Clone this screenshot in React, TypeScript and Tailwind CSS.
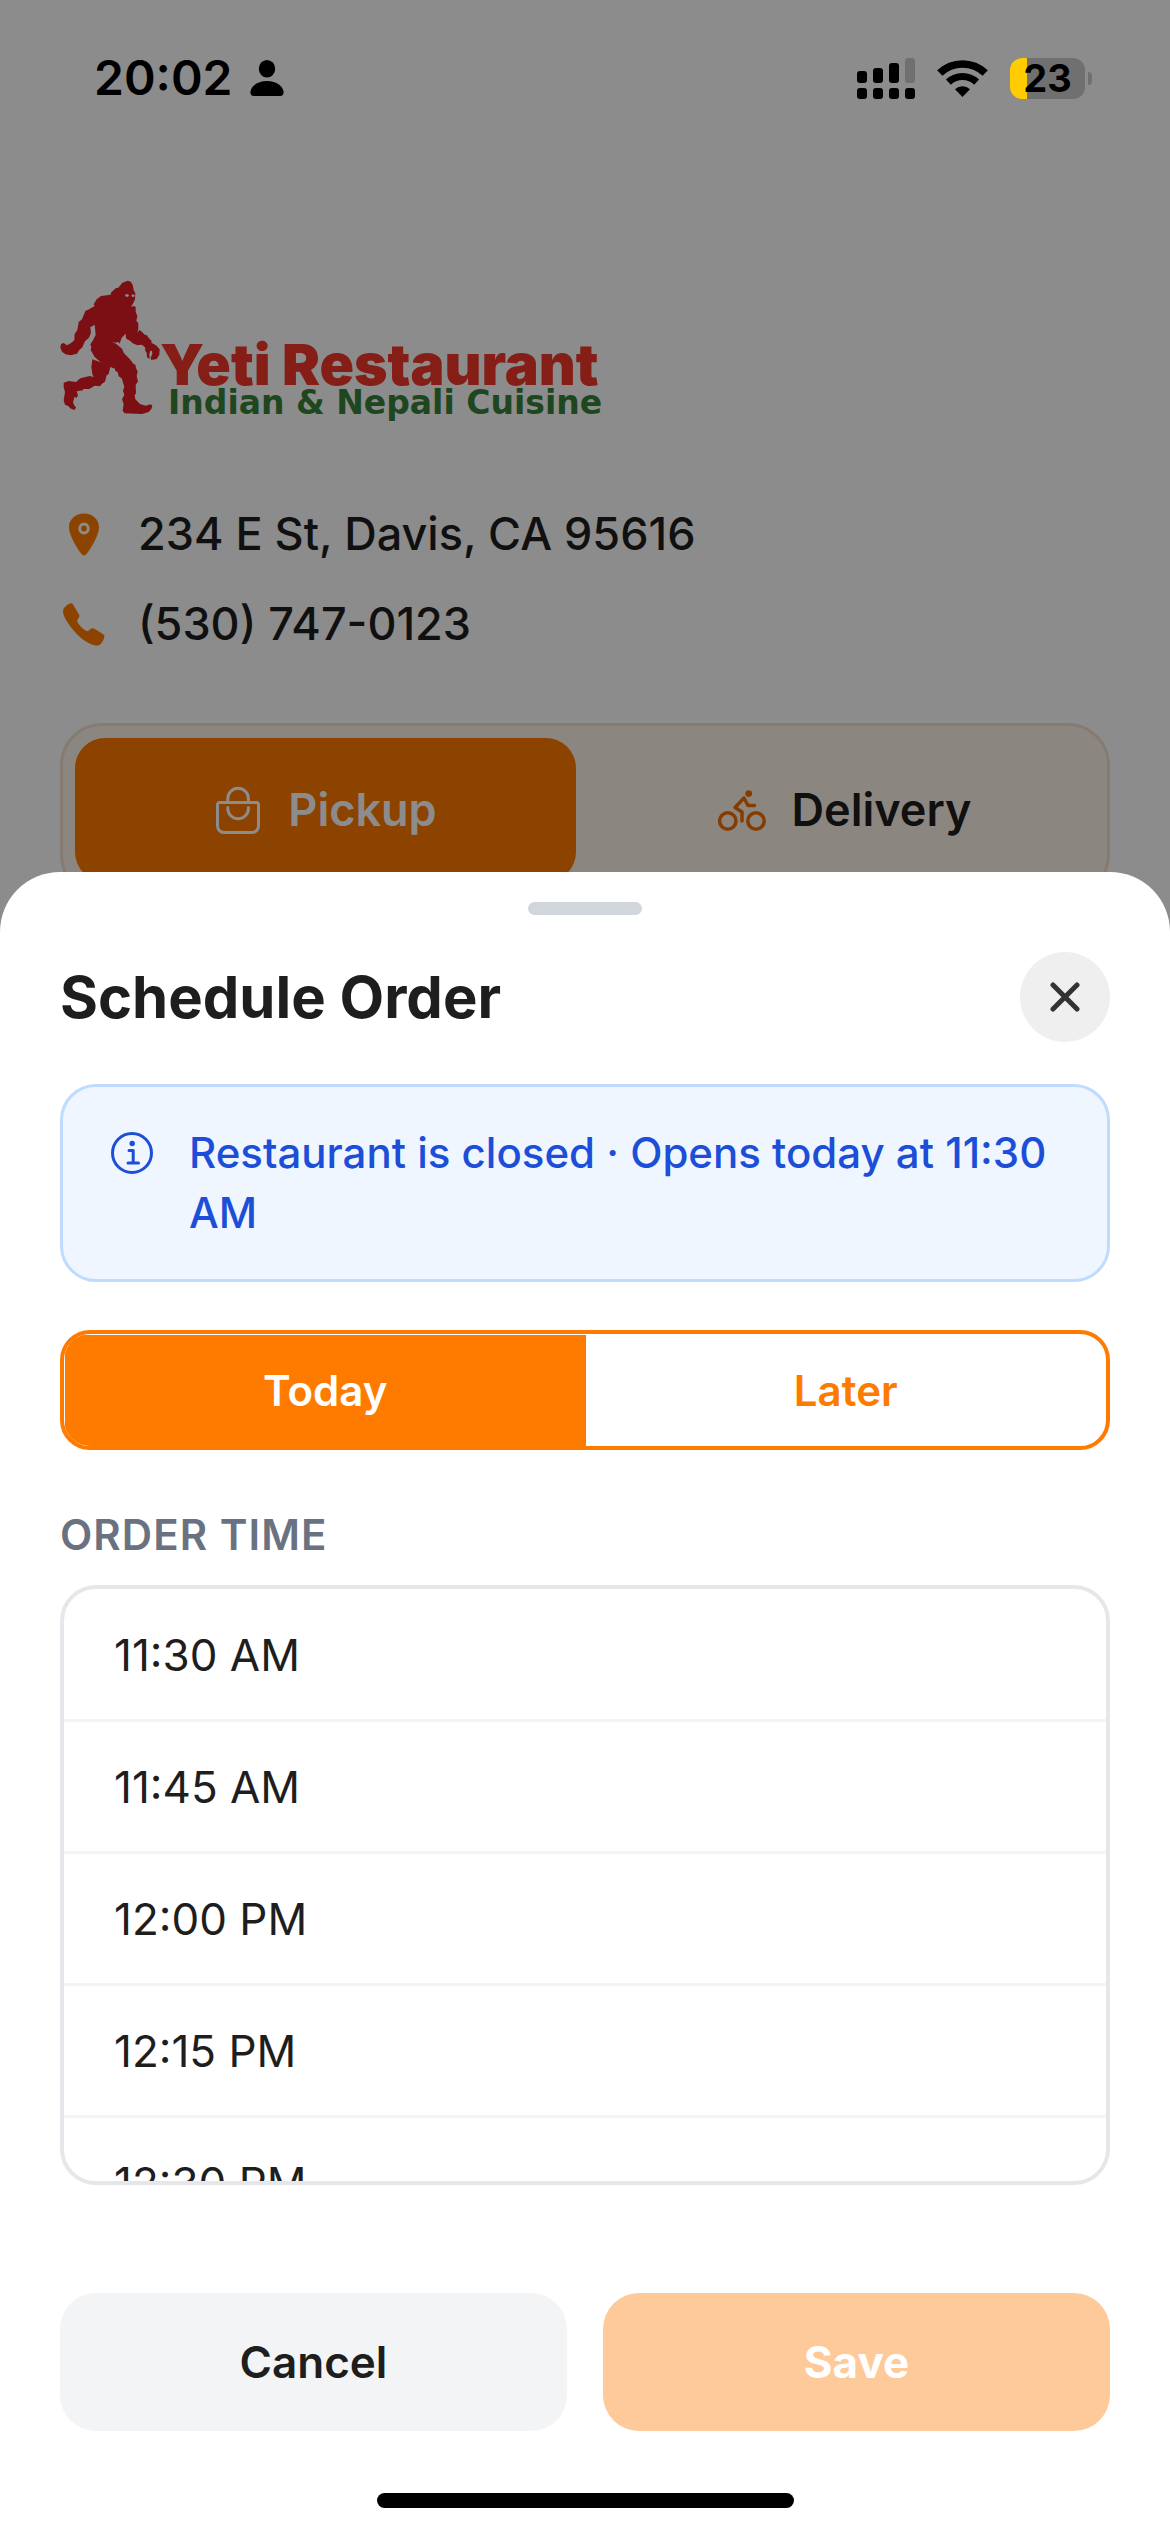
import { useState } from "react";

const TIMES = ["11:30 AM", "11:45 AM", "12:00 PM", "12:15 PM", "12:30 PM", "12:45 PM", "1:00 PM"];

function PersonIcon() {
  return (
    <svg className="h-9 w-[34px]" viewBox="0 0 34 36" aria-hidden="true">
      <ellipse cx="17" cy="8.8" rx="8.2" ry="8.8" />
      <path d="M17 21c9.500 0 16.600 5.500 16.600 11.500 0 2.300-1.200 3.500-3.400 3.500H3.800C1.600 36 .4 34.800.4 32.500.4 26.500 7.500 21 17 21z" />
    </svg>
  );
}

function SignalIcon() {
  return (
    <svg className="h-[41px] w-[58px]" viewBox="0 0 58 41" aria-hidden="true">
      <rect x="0" y="13" width="10" height="12" rx="3" />
      <rect x="16" y="10" width="10" height="15" rx="3" />
      <rect x="32" y="5" width="10" height="20" rx="3" />
      <rect x="48" y="0" width="10" height="25" rx="3" opacity=".2" />
      <rect x="0" y="30" width="10" height="11" rx="3" />
      <rect x="16" y="30" width="10" height="11" rx="3" />
      <rect x="32" y="30" width="10" height="11" rx="3" />
      <rect x="48" y="30" width="10" height="11" rx="3" />
    </svg>
  );
}

function WifiIcon() {
  return (
    <svg className="h-[39px] w-[51px]" viewBox="0 0 51 39" fill="none" stroke="#000" aria-hidden="true">
      <path d="M2.800 14.100a33 33 0 0 1 45.400 0" strokeWidth="7.600" />
      <path d="M11.400 23.100a20.500 20.500 0 0 1 28.200 0" strokeWidth="7.200" />
      <path d="M18 30.200a11 11 0 0 1 15 0L25.500 38z" fill="#000" stroke="none" />
    </svg>
  );
}

function StatusBar() {
  return (
    <header className="relative z-20 flex h-[156px] items-center justify-between pr-[78px] pl-[94px] text-black">
      <div className="flex items-center gap-[18px]">
        <time className="text-[48px] leading-[60px] font-semibold">20:02</time>
        <PersonIcon />
      </div>
      <div className="flex items-center gap-[22px]">
        <SignalIcon />
        <WifiIcon />
        <div className="flex items-center gap-[3px]">
          <div className="relative flex h-[41px] w-[75px] items-center justify-center rounded-xl bg-black/20">
            <div className="absolute inset-y-0 left-0 w-[17px] rounded-l-xl bg-[#ffcc00]" />
            <span className="relative text-[38px] leading-[48px] font-bold">23</span>
          </div>
          <div className="h-[13px] w-1 rounded-r-full bg-black/20" />
        </div>
      </div>
    </header>
  );
}

function YetiMark() {
  return (
    <svg className="h-[135px] w-[100px] shrink-0" viewBox="30 30 300 405" fill="#e11d24" fillRule="evenodd" aria-hidden="true">
      <path d="M233 32L242 35 248 44 251 60 256 70 255 88 250 99 243 110 253 108 257 112 257 125 262 138 259 152 265 160 265 176 262 188 268 180 274 184 285 195 290 195 297 205 305 213 304 218 318 226 329 238 328 254 320 267 304 270 302 263 307 252 306 243 301 242 298 252 299 267 291 262 290 248 285 241 286 233 276 224 262 226 248 220 240 212 231 208 228 204 227 191 215 203 209 221 205 216 196 218 184 214 200 223 216 236 222 250 240 268 250 281 256 284 258 294 263 305 260 318 264 334 257 345 258 370 254 376 256 388 270 402 286 407 303 403 307 408 304 417 296 426 276 432 224 430 218 422 221 402 216 388 223 374 219 362 223 350 215 325 206 319 203 306 196 303 195 296 181 291 176 312 170 316 165 335 156 341 150 349 134 347 118 357 100 357 99 361 80 364 84 376 80 384 74 380 69 396 72 405 78 412 74 420 60 415 56 409 45 404 41 391 45 366 41 352 41 338 56 333 78 336 91 325 119 318 131 321 127 313 124 291 127 268 152 277 134 261 122 240 124 231 121 223 128 212 137 195 134 164 128 168 121 171 123 188 117 203 105 214 97 232 88 240 81 251 62 256 46 253 36 245 31 233 33 222 41 219 51 226 62 220 73 211 74 192 82 180 86 156 96 148 106 123 117 118 134 108 131 103 140 88 153 78 182 74 183 68 197 55 205 53 217 38zM224 74l4 6h6l3-3-3-5zM244 77l3 4 6-1 1-6-6-1z" />
    </svg>
  );
}

function PinIcon() {
  return (
    <svg className="size-[45px]" viewBox="0 0 45 45" fill="#ff7a00" fillRule="evenodd" aria-hidden="true">
      <path d="M24 1.500c-8.500 0-15 6-15 13.500 0 8.500 8.500 22.500 13 27.500 1.100 1.200 2.900 1.200 4 0 4.500-5 13-19 13-27.500 0-7.500-6.500-13.500-15-13.500zM24 10.500a5.700 6 0 1 1 0 12 5.700 6 0 0 1 0-12z" />
      <ellipse cx="24" cy="16.500" rx="2.800" ry="3" />
    </svg>
  );
}

function PhoneIcon() {
  return (
    <svg className="size-[45px]" viewBox="0 0 45 45" fill="#ff7a00" aria-hidden="true">
      <path d="M3 9.200C3.200 6 6.500 2.800 10 1.500c1.300-.4 2.300 0 3 1l6 10c.6 1.200.5 2.200-.2 3.200l-1.300 2c-.6 1-.3 2 .3 3 2 3.200 5 6.200 8.300 8 .9.500 1.700.4 2.500-.2l2.200-1.700c1.200-.8 2.500-.8 3.700-.1l8.700 5.600c1.200.8 1.500 1.800 1.100 3.100-1 3.300-2.600 5.600-4.600 7.300-1.700 1-3.300 1-5.100.6C29 42.200 21.500 37.500 15 30 8.500 22.500 3 14.500 3 9.200z" />
    </svg>
  );
}

function BagIcon() {
  return (
    <svg className="size-12" viewBox="0 0 48 48" fill="none" stroke="currentColor" strokeWidth="3" aria-hidden="true">
      <path d="M5.500 16.500h37a2 2 0 0 1 2 2V40a6.500 6.500 0 0 1-6.500 6.500H10A6.500 6.500 0 0 1 3.500 40V18.500a2 2 0 0 1 2-2z" />
      <path d="M13.800 16.500v-4a10.300 10.300 0 0 1 20.600 0v4" />
      <path d="M13.800 21.500v1a10.300 10.300 0 0 0 20.600 0v-1" strokeLinecap="round" />
    </svg>
  );
}

function BikeIcon() {
  return (
    <svg className="size-12" viewBox="0 0 48 48" fill="none" stroke="#f56e00" strokeWidth="3.500" strokeLinecap="round" strokeLinejoin="round" aria-hidden="true">
      <circle cx="9.800" cy="35" r="8.200" />
      <circle cx="38" cy="35" r="8.200" />
      <circle cx="30.700" cy="7.600" r="3.400" fill="#f56e00" stroke="none" />
      <path d="M36.500 19.500H30L26 12l-9 9.500 7 4.500v9" />
    </svg>
  );
}

function InfoIcon() {
  return (
    <svg className="my-[9px] size-[42px] shrink-0" viewBox="0 0 42 42" fill="none" stroke="currentColor" strokeWidth="3" strokeLinecap="round" strokeLinejoin="round" aria-hidden="true">
      <circle cx="21" cy="21" r="19.500" />
      <circle cx="21.200" cy="11.500" r="2.700" fill="currentColor" stroke="none" />
      <path d="M18 18.500h4.200V31M17 31h10.500" />
    </svg>
  );
}

function Storefront() {
  return (
    <main className="px-[60px] pt-[124px] text-[#1e1e1e]">
      <h1 className="flex h-[143px] items-start">
        <YetiMark />
        <span className="flex flex-col pt-[61px] whitespace-nowrap">
          <span className="text-[57px] leading-[48px] font-black text-[#f13728]">Yeti Restaurant</span>
          <span className="pl-2 font-['DejaVu_Sans'] text-[33px] leading-[28px] font-bold text-[#37803a]">Indian &amp; Nepali Cuisine</span>
        </span>
      </h1>

      <address className="mt-[81px] flex flex-col gap-[30px] text-[45px] leading-[60px] font-medium not-italic">
        <p className="flex items-center gap-[33px]">
          <PinIcon />
          234 E St, Davis, CA 95616
        </p>
        <a className="flex items-center gap-[33px]" href="tel:+15307470123">
          <PhoneIcon />
          (530) 747-0123
        </a>
      </address>

      <div className="mt-[69px] grid grid-cols-2 gap-[18px] rounded-[42px] border-3 border-[#f2e0d1] bg-[#fef6ea] p-3 text-[45px] font-semibold">
        <button type="button" className="flex h-36 items-center justify-center gap-[26px] rounded-[30px] bg-[#ff7a00] text-white">
          <BagIcon />
          Pickup
        </button>
        <button type="button" className="flex h-36 items-center justify-center gap-[26px] rounded-[30px]">
          <BikeIcon />
          Delivery
        </button>
      </div>
    </main>
  );
}

function ScheduleSheet() {
  const [day, setDay] = useState("today");
  return (
    <section role="dialog" aria-labelledby="sheet-title" className="absolute inset-x-0 bottom-0 z-30 rounded-t-[60px] bg-white px-[60px] pt-[30px] pb-6 text-[#1e1e1e]">
      <div className="mx-auto h-[13px] w-[114px] rounded-full bg-gray-300" />

      <div className="mt-[37px] flex items-center justify-between">
        <h2 id="sheet-title" className="text-[58px] leading-[72px] font-bold">Schedule Order</h2>
        <button type="button" aria-label="Close" className="flex size-[90px] items-center justify-center rounded-full bg-[#efefef]">
          <svg className="size-[30px]" viewBox="0 0 30 30" stroke="#333" strokeWidth="5" strokeLinecap="round" aria-hidden="true">
            <path d="M3 3l24 24M27 3L3 27" />
          </svg>
        </button>
      </div>

      <div className="mt-[42px] flex items-start gap-9 rounded-[36px] border-3 border-[#bfdbfe] bg-[#eff6ff] px-12 py-9 text-[#1d4ed8]">
        <InfoIcon />
        <p className="text-[42px] leading-[60px] font-medium">Restaurant is closed · Opens today at 11:30 AM</p>
      </div>

      <div className="mt-12 grid h-[120px] grid-cols-2 overflow-hidden rounded-[30px] border-4 border-[#ff7b00] bg-white pt-px pl-px text-[42px] font-semibold text-[#ff7b00]">
        <button type="button" aria-pressed={day === "today"} onClick={() => setDay("today")} className="aria-pressed:bg-[#ff7b00] aria-pressed:text-white">
          Today
        </button>
        <button type="button" aria-pressed={day === "later"} onClick={() => setDay("later")} className="aria-pressed:bg-[#ff7b00] aria-pressed:text-white">
          Later
        </button>
      </div>

      <h3 id="time-label" className="mt-[60px] text-[42px] leading-[50px] font-semibold tracking-wide text-gray-500">ORDER TIME</h3>

      <ul aria-labelledby="time-label" className="mt-[25px] h-[600px] overflow-y-auto rounded-[36px] border-4 border-gray-200 pt-px [scrollbar-width:none]">
        {TIMES.map((time) => (
          <li key={time} className="border-b-3 border-gray-100">
            <button type="button" className="block h-[129px] w-full px-[50px] text-left text-[44px]">{time}</button>
          </li>
        ))}
      </ul>

      <div className="mt-[108px] grid grid-cols-2 gap-9 text-[44px]">
        <button type="button" className="h-[138px] rounded-[36px] bg-gray-100 font-semibold">Cancel</button>
        <button type="button" disabled className="h-[138px] rounded-[36px] bg-[#ffca9a] font-bold text-white">Save</button>
      </div>

      <div className="mx-auto mt-[62px] h-[15px] w-[417px] rounded-full bg-black" />
    </section>
  );
}

export default function App() {
  return (
    <div className="relative min-h-screen overflow-hidden bg-white font-[Inter,sans-serif]">
      <div className="absolute inset-0 z-10 bg-black/45" />
      <StatusBar />
      <Storefront />
      <ScheduleSheet />
    </div>
  );
}
